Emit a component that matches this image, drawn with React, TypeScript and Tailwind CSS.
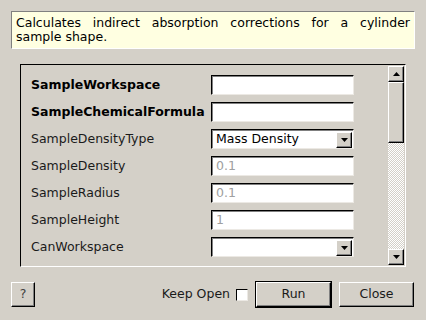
import React from "react";

const font = { fontFamily: '"DejaVu Sans", sans-serif' };

function Field({ value, gray }: { value?: string; gray?: boolean }) {
  return (
    <div className="w-[143px] h-[20px] bg-white border border-t-[#000] border-l-[#000] border-b-[#ece9e4] border-r-[#ece9e4] shadow-[inset_1px_1px_0_#808080] flex items-center pl-[4px]">
      <span className={gray ? "text-[#a0a0a0]" : "text-black"}>{value}</span>
    </div>
  );
}

function Arrow({ up }: { up?: boolean }) {
  return (
    <svg width="7" height="4" viewBox="0 0 7 4">
      {up ? <polygon points="0,4 7,4 3.5,0" fill="#000" /> : <polygon points="0,0 7,0 3.5,4" fill="#000" />}
    </svg>
  );
}

function RaisedBox({ className, children }: { className: string; children?: React.ReactNode }) {
  return (
    <div
      className={
        "bg-[#d4d0c8] border border-t-white border-l-white border-b-black border-r-black shadow-[inset_-1px_-1px_0_#808080] flex items-center justify-center " +
        className
      }
    >
      {children}
    </div>
  );
}

function Combo({ value }: { value?: string }) {
  return (
    <div className="w-[143px] h-[20px] bg-white border border-t-[#000] border-l-[#000] border-b-[#ece9e4] border-r-[#ece9e4] shadow-[inset_1px_1px_0_#808080] flex items-center pl-[4px] pr-[1px]">
      <span className="flex-1 text-black">{value}</span>
      <RaisedBox className="w-[16px] h-[16px] mt-[1px]">
        <Arrow />
      </RaisedBox>
    </div>
  );
}

const rows: { label: string; bold?: boolean; kind: "field" | "combo"; value?: string; gray?: boolean }[] = [
  { label: "SampleWorkspace", bold: true, kind: "field" },
  { label: "SampleChemicalFormula", bold: true, kind: "field" },
  { label: "SampleDensityType", kind: "combo", value: "Mass Density" },
  { label: "SampleDensity", kind: "field", value: "0.1", gray: true },
  { label: "SampleRadius", kind: "field", value: "0.1", gray: true },
  { label: "SampleHeight", kind: "field", value: "1", gray: true },
  { label: "CanWorkspace", kind: "combo" },
];

export default function App() {
  return (
    <div className="w-[426px] h-[320px] bg-[#d4d0c8] text-[12.5px] text-[#1a1a1a] flex flex-col overflow-hidden" style={font}>
      <div className="mx-[11px] mt-[11px] h-[38px] bg-[#ffffe1] border border-t-[#808080] border-l-[#808080] border-b-white border-r-white px-[4px] pt-[4px] leading-[14px] text-black text-justify">
        Calculates indirect absorption corrections for a cylinder sample shape.
      </div>

      <div className="mx-[20px] mt-[15px] h-[203px] border border-t-[#000] border-l-[#000] border-b-white border-r-white flex">
        <div className="flex-1 flex flex-col pl-[10px] pt-[10px] gap-[7px]">
          {rows.map((r) => (
            <div key={r.label} className="flex items-center h-[20px]">
              <div className={"w-[180px] pt-[1px] " + (r.bold ? "font-bold text-black" : "")}>{r.label}</div>
              {r.kind === "field" ? <Field value={r.value} gray={r.gray} /> : <Combo value={r.value} />}
            </div>
          ))}
        </div>
        <div className="w-[16px] my-[1px] mr-[1px] flex flex-col">
          <RaisedBox className="h-[16px]">
            <Arrow up />
          </RaisedBox>
          <RaisedBox className="h-[61px]" />
          <div className="flex-1 bg-[repeating-conic-gradient(#ffffff_0_25%,#d4d0c8_0_50%)] bg-[length:2px_2px]" />
          <RaisedBox className="h-[16px]">
            <Arrow />
          </RaisedBox>
        </div>
      </div>

      <div className="flex items-center mt-[14px] ml-[11px] mr-[12px]">
        <RaisedBox className="w-[24px] h-[25px] text-[#404040]">?</RaisedBox>
        <div className="flex-1" />
        <span className="mr-[6px]">Keep Open</span>
        <div className="w-[12px] h-[12px] bg-white border border-t-[#000] border-l-[#000] border-b-[#ece9e4] border-r-[#ece9e4] mr-[7px]" />
        <div className="border border-black">
          <RaisedBox className="w-[75px] h-[25px]">Run</RaisedBox>
        </div>
        <RaisedBox className="w-[75px] h-[25px] ml-[7px]">Close</RaisedBox>
      </div>
    </div>
  );
}
